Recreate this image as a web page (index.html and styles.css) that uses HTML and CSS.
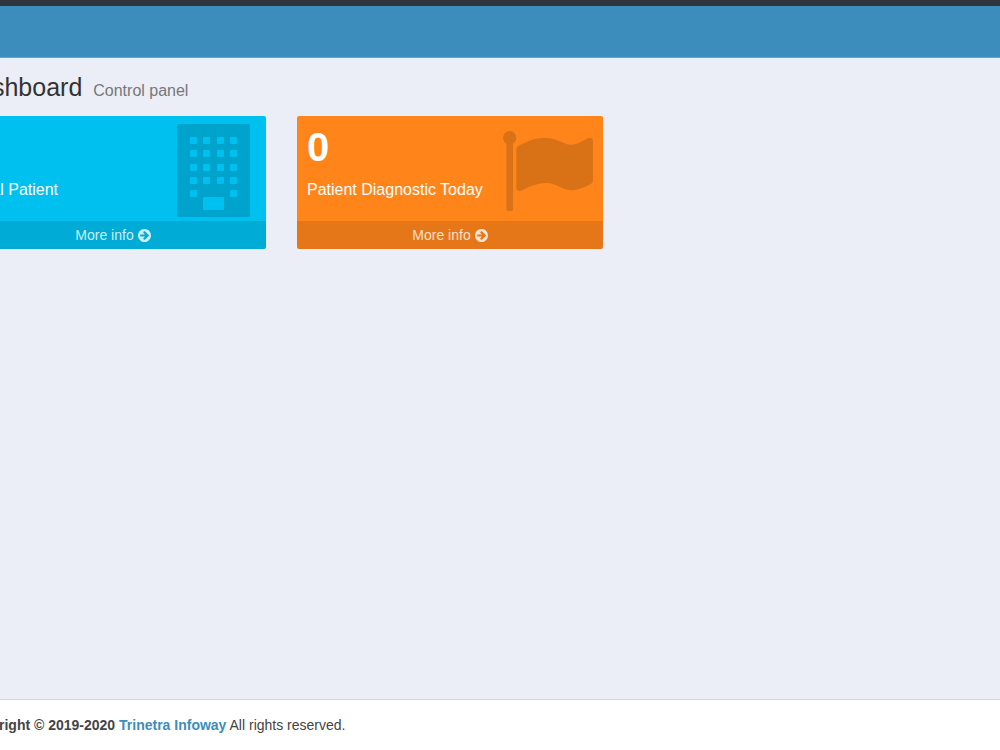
FILE: index.html
```
<!DOCTYPE html>
<html lang="en">
<head>
  <meta charset="UTF-8">
  <meta name="viewport" content="width=device-width, initial-scale=1.0">
  <title>Dashboard</title>
  <link rel="stylesheet" href="styles.css">
</head>
<body>

  <div class="wrapper">
    <header class="main-header"></header>

    <main class="content">
      <h1>Dashboard <small>Control panel</small></h1>

      <div class="boxes">
        <div class="small-box aqua">
          <div class="inner">
            <div class="text">
              <h3>&nbsp;</h3>
              <p>Total Patient</p>
            </div>
            <svg class="building" viewBox="0 0 73 93" aria-hidden="true">
              <path fill-rule="evenodd" d="M2 0h69q2 0 2 2v89q0 2-2 2H2q-2 0-2-2V2q0-2 2-2z
                M14 13h5q1 0 1 1v5q0 1-1 1h-5q-1 0-1-1v-5q0-1 1-1z M27 13h5q1 0 1 1v5q0 1-1 1h-5q-1 0-1-1v-5q0-1 1-1z M41 13h5q1 0 1 1v5q0 1-1 1h-5q-1 0-1-1v-5q0-1 1-1z M54 13h5q1 0 1 1v5q0 1-1 1h-5q-1 0-1-1v-5q0-1 1-1z
                M14 26h5q1 0 1 1v5q0 1-1 1h-5q-1 0-1-1v-5q0-1 1-1z M27 26h5q1 0 1 1v5q0 1-1 1h-5q-1 0-1-1v-5q0-1 1-1z M41 26h5q1 0 1 1v5q0 1-1 1h-5q-1 0-1-1v-5q0-1 1-1z M54 26h5q1 0 1 1v5q0 1-1 1h-5q-1 0-1-1v-5q0-1 1-1z
                M14 40h5q1 0 1 1v5q0 1-1 1h-5q-1 0-1-1v-5q0-1 1-1z M27 40h5q1 0 1 1v5q0 1-1 1h-5q-1 0-1-1v-5q0-1 1-1z M41 40h5q1 0 1 1v5q0 1-1 1h-5q-1 0-1-1v-5q0-1 1-1z M54 40h5q1 0 1 1v5q0 1-1 1h-5q-1 0-1-1v-5q0-1 1-1z
                M14 53h5q1 0 1 1v5q0 1-1 1h-5q-1 0-1-1v-5q0-1 1-1z M27 53h5q1 0 1 1v5q0 1-1 1h-5q-1 0-1-1v-5q0-1 1-1z M41 53h5q1 0 1 1v5q0 1-1 1h-5q-1 0-1-1v-5q0-1 1-1z M54 53h5q1 0 1 1v5q0 1-1 1h-5q-1 0-1-1v-5q0-1 1-1z
                M14 66h5q1 0 1 1v5q0 1-1 1h-5q-1 0-1-1v-5q0-1 1-1z M54 66h5q1 0 1 1v5q0 1-1 1h-5q-1 0-1-1v-5q0-1 1-1z
                M27 73h19q1 0 1 1v11q0 1-1 1h-19q-1 0-1-1v-11q0-1 1-1z"/>
            </svg>
          </div>
          <a href="#" class="more">More info
            <svg class="arrow" viewBox="128 128 1536 1536" aria-hidden="true"><path d="M1413 896q0-27-18-45l-362-362-91-91q-18-18-45-18t-45 18l-91 91q-18 18-18 45t18 45l189 189h-502q-26 0-45 19t-19 45v128q0 26 19 45t45 19h502l-189 189q-19 19-19 45t19 45l91 91q18 18 45 18t45-18l91-91 362-362q18-18 18-45zm251 0q0 209-103 385.5t-279.5 279.5-385.5 103-385.5-103-279.5-279.5-103-385.5 103-385.5 279.5-279.5 385.5-103 385.5 103 279.5 279.5 103 385.5z"/></svg>
          </a>
        </div>

        <div class="small-box orange">
          <div class="inner">
            <div class="text">
              <h3>0</h3>
              <p>Patient Diagnostic Today</p>
            </div>
            <svg class="flag" viewBox="64 128 1728 1536" aria-hidden="true"><path d="M320 256q0 72-64 110v1266q0 13-9.5 22.5t-22.5 9.5h-64q-13 0-22.5-9.5t-9.5-22.5v-1266q-64-38-64-110 0-53 37.5-90.5t90.5-37.5 90.5 37.5 37.5 90.5zm1472 64v763q0 25-12.5 38.5t-39.5 27.5q-215 116-369 116-61 0-123.5-22t-108.5-48-115.5-48-142.5-22q-192 0-464 146-17 9-33 9-26 0-45-19t-19-45v-742q0-32 31-55 21-14 79-43 236-120 421-120 107 0 200 29t219 88q38 19 88 19 54 0 117.5-21t110-47 88-47 54.5-21q26 0 45 19t19 45z"/></svg>
          </div>
          <a href="#" class="more">More info
            <svg class="arrow" viewBox="128 128 1536 1536" aria-hidden="true"><path d="M1413 896q0-27-18-45l-362-362-91-91q-18-18-45-18t-45 18l-91 91q-18 18-18 45t18 45l189 189h-502q-26 0-45 19t-19 45v128q0 26 19 45t45 19h502l-189 189q-19 19-19 45t19 45l91 91q18 18 45 18t45-18l91-91 362-362q18-18 18-45zm251 0q0 209-103 385.5t-279.5 279.5-385.5 103-385.5-103-279.5-279.5-103-385.5 103-385.5 279.5-279.5 385.5-103 385.5 103 279.5 279.5 103 385.5z"/></svg>
          </a>
        </div>
      </div>
    </main>

    <footer class="main-footer">
      <strong>Copyright © 2019-2020 <a href="#">Trinetra Infoway</a></strong> All rights reserved.
    </footer>
  </div>

</body>
</html>
```
FILE: styles.css
```
* {
  box-sizing: border-box;
}
body {
  margin: 0;
  font-family: "Liberation Sans", Arial, sans-serif;
  font-size: 14px;
  line-height: 20px;
  color: #444;
  background-color: #ecf0f5;
  overflow-x: hidden;
}
a {
  text-decoration: none;
}
h1, h3, p {
  margin: 0;
}
.wrapper {
  display: flex;
  flex-direction: column;
  min-height: 100vh;
  margin-left: -56px;
}
.main-header {
  height: 58px;
  background-color: #3c8dbc;
  border-top: 6px solid #30353d;
  border-bottom: 1px solid #6ba3c5;
}
.content {
  flex: 1;
  padding: 14px 60px 16px 16px;
  background-color: #ebeef6;
}
h1 {
  font-size: 25px;
  font-weight: normal;
  line-height: 30px;
  color: #333;
}
h1 small {
  padding-left: 4px;
  font-size: 16px;
  color: #777;
}
.boxes {
  display: grid;
  grid-template-columns: repeat(3, 1fr);
  gap: 31px;
  margin-top: 10px;
}
.small-box {
  border-radius: 2px;
  overflow: hidden;
  color: #fff;
}
.aqua {
  background-color: #00c0ef;
}
.orange {
  background-color: #ff851b;
}
.inner {
  display: flex;
  justify-content: space-between;
  height: 105px;
  padding: 8px 10px 0 10px;
}
h3 {
  padding-top: 2px;
  font-size: 40px;
  line-height: 42px;
}
.text p {
  padding-top: 12px;
  font-size: 16px;
}
.building {
  width: 73px;
  height: 93px;
  margin-right: 6px;
  fill: rgba(0, 0, 0, 0.15);
}
.flag {
  width: 90px;
  height: 80px;
  margin-top: 7px;
  fill: rgba(0, 0, 0, 0.15);
}
.more {
  display: flex;
  justify-content: center;
  align-items: center;
  gap: 4px;
  height: 28px;
  color: rgba(255, 255, 255, 0.8);
  background-color: rgba(0, 0, 0, 0.1);
}
.arrow {
  width: 13px;
  height: 13px;
  fill: currentColor;
}
.main-footer {
  padding: 15px 20px;
  background-color: #fff;
  border-top: 1px solid #d2d6de;
}
.main-footer a {
  color: #3c8dbc;
}
```
